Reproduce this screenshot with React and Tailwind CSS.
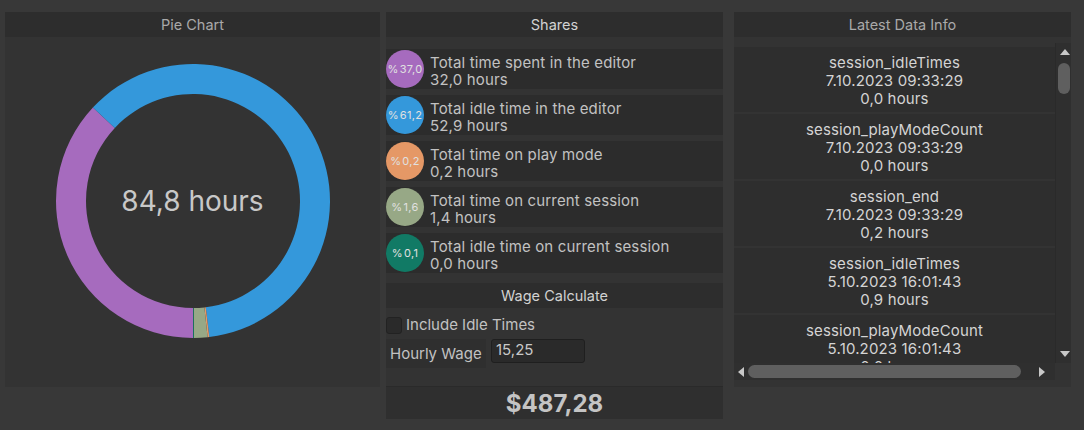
import React from "react";

const shares = [
  { pct: "%37,0", label: "Total time spent in the editor", hours: "32,0 hours", color: "#a66bbe", value: 37.0 },
  { pct: "%61,2", label: "Total idle time in the editor", hours: "52,9 hours", color: "#3498db", value: 61.2 },
  { pct: "%0,2", label: "Total time on play mode", hours: "0,2 hours", color: "#e59866", value: 0.2 },
  { pct: "%1,6", label: "Total time on current session", hours: "1,4 hours", color: "#97a886", value: 1.6 },
  { pct: "%0,1", label: "Total idle time on current session", hours: "0,0 hours", color: "#117a65", value: 0.1 },
];

const latest = [
  ["session_idleTimes", "7.10.2023 09:33:29", "0,0 hours"],
  ["session_playModeCount", "7.10.2023 09:33:29", "0,0 hours"],
  ["session_end", "7.10.2023 09:33:29", "0,2 hours"],
  ["session_idleTimes", "5.10.2023 16:01:43", "0,9 hours"],
  ["session_playModeCount", "5.10.2023 16:01:43", "0,0 hours"],
];

// compass angle (deg, clockwise from top) -> point
const pt = (cx, cy, r, a) => {
  const rad = (a * Math.PI) / 180;
  return [cx + r * Math.sin(rad), cy - r * Math.cos(rad)];
};

const arcPath = (cx, cy, ro, ri, a0, a1) => {
  const large = a1 - a0 > 180 ? 1 : 0;
  const [x0, y0] = pt(cx, cy, ro, a0);
  const [x1, y1] = pt(cx, cy, ro, a1);
  const [x2, y2] = pt(cx, cy, ri, a1);
  const [x3, y3] = pt(cx, cy, ri, a0);
  return `M${x0} ${y0} A${ro} ${ro} 0 ${large} 1 ${x1} ${y1} L${x2} ${y2} A${ri} ${ri} 0 ${large} 0 ${x3} ${y3} Z`;
};

const Donut = () => {
  let a = 180;
  const total = shares.reduce((s, x) => s + x.value, 0);
  return (
    <svg width="276" height="276" viewBox="0 0 276 276">
      {shares.map((s) => {
        const span = (s.value / total) * 360;
        const d = arcPath(138, 138, 137, 107, a, a + span);
        a += span;
        return <path key={s.label} d={d} fill={s.color} />;
      })}
    </svg>
  );
};

const Header = ({ children, light }) => (
  <div className={`h-[25px] flex items-center justify-center bg-[#2d2d2d] text-[14.5px] ${light ? "text-[#d2d2d2]" : "text-[#a9a9a9]"}`}>
    {children}
  </div>
);

export default function App() {
  return (
    <div className="w-[1084px] h-[430px] bg-[#383838] pt-[12px] pl-[5px] flex items-start font-['Inter','Liberation_Sans',sans-serif]">
      {/* Pie chart */}
      <div className="w-[375px] h-[375px] bg-[#333333] flex flex-col">
        <Header>Pie Chart</Header>
        <div className="relative flex justify-center pt-[26px]">
          <Donut />
          <div className="absolute left-0 right-0 top-[147px] text-center text-[28px] leading-[34px] text-[#c8c8c8]">84,8 hours</div>
        </div>
      </div>

      {/* Shares */}
      <div className="w-[337px] ml-[6px] flex flex-col">
        <div className="bg-[#333333] flex flex-col">
          <Header light>Shares</Header>
          <div className="flex flex-col gap-[6px] pt-[12px] pb-[10px]">
            {shares.map((s) => (
              <div key={s.label} className="h-[40px] bg-[#2c2c2c] flex items-center">
                <div
                  className="w-[38px] h-[38px] rounded-full flex items-center justify-center gap-[1px] text-[11px] tracking-[0.03em] text-[#e0e0e0] shrink-0"
                  style={{ backgroundColor: s.color }}
                >
                  <span>%</span>
                  <span>{s.pct.slice(1)}</span>
                </div>
                <div className="ml-[6px] pt-[3px] flex flex-col text-[15px] leading-[17px] tracking-[0.01em] text-[#c2c2c2]">
                  <span>{s.label}</span>
                  <span>{s.hours}</span>
                </div>
              </div>
            ))}
          </div>
          <Header light>Wage Calculate</Header>
          <div className="flex items-center h-[30px] pt-[5px]">
            <div className="w-[16px] h-[17px] rounded-[3px] bg-[#2a2a2a] border border-[#222]" />
            <span className="ml-[4px] text-[15px] text-[#c2c2c2]">Include Idle Times</span>
          </div>
          <div className="flex items-start h-[48px] pt-[1px]">
            <div className="w-[100px] h-[29px] bg-[#2f2f2f] flex items-center pl-[4px] pt-[2px] text-[15px] text-[#c2c2c2]">Hourly Wage</div>
            <div className="ml-[5px] w-[94px] h-[24px] rounded-[3px] bg-[#2a2a2a] border border-[#1f1f1f] pl-[4px] text-[15px] leading-[20px] text-[#c8c8c8]">
              15,25
            </div>
          </div>
        </div>
        <div className="h-[33px] border-t border-[#2a2a2a] bg-[#2f2f2f] flex items-center justify-center pt-[2px] text-[24px] font-bold text-[#c4c4c4]">
          $487,28
        </div>
      </div>

      {/* Latest Data Info */}
      <div className="w-[337px] h-[375px] ml-[11px] bg-[#333333] flex flex-col">
        <Header>Latest Data Info</Header>
        <div className="mt-[6px] flex">
          <div className="w-[321px] h-[320px] overflow-hidden pt-[4px] flex flex-col gap-[2px]">
            {latest.map((l, i) => (
              <div key={i} className="h-[65px] shrink-0 bg-[#2e2e2e] pt-[7px] flex flex-col items-center text-[15px] leading-[18px] tracking-[0.01em] text-[#d4d4d4]">
                <span>{l[0]}</span>
                <span>{l[1]}</span>
                <span>{l[2]}</span>
              </div>
            ))}
          </div>
          <div className="relative w-[16px] h-[320px] bg-[#2f2f2f] border-l border-[#2a2a2a]">
            <div className="absolute left-[4px] top-[6px] w-0 h-0 border-l-[5px] border-r-[5px] border-b-[6px] border-l-transparent border-r-transparent border-b-[#c8c8c8]" />
            <div className="absolute left-[2px] top-[20px] w-[12px] h-[31px] rounded-full bg-[#5f5f5f]" />
            <div className="absolute left-[4px] bottom-[6px] w-0 h-0 border-l-[5px] border-r-[5px] border-t-[6px] border-l-transparent border-r-transparent border-t-[#c8c8c8]" />
          </div>
        </div>
        <div className="flex">
          <div className="relative w-[321px] h-[17px] bg-[#2f2f2f]">
            <div className="absolute left-[4px] top-[4px] w-0 h-0 border-t-[5px] border-b-[5px] border-r-[6px] border-t-transparent border-b-transparent border-r-[#c8c8c8]" />
            <div className="absolute left-[14px] top-[2px] w-[273px] h-[13px] rounded-full bg-[#5f5f5f]" />
            <div className="absolute right-[10px] top-[4px] w-0 h-0 border-t-[5px] border-b-[5px] border-l-[6px] border-t-transparent border-b-transparent border-l-[#c8c8c8]" />
          </div>
        </div>
      </div>
    </div>
  );
}
